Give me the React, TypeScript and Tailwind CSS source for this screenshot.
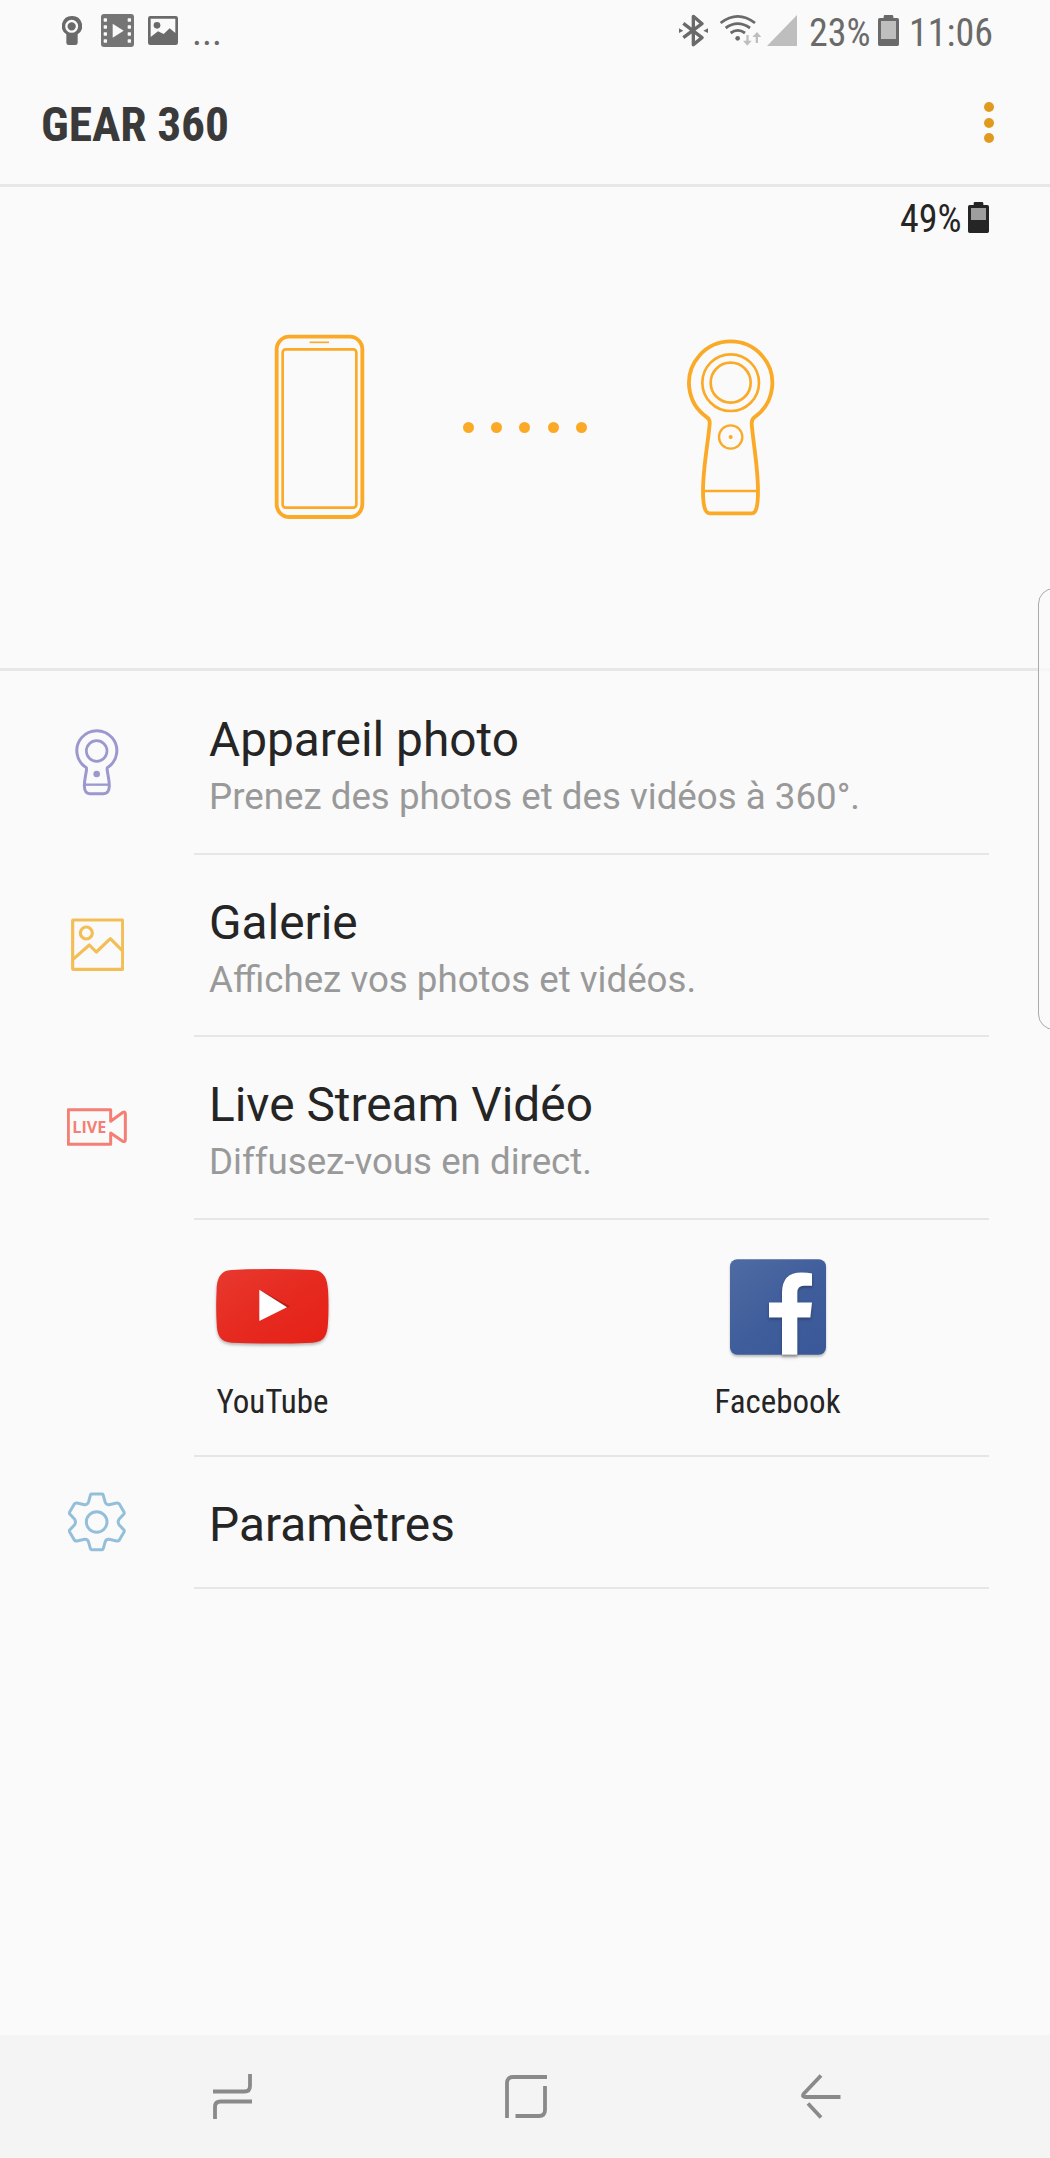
import type { ReactNode } from "react";

const ORANGE = "#fbaa27";

function Battery({ color, empty, level }: { color: string; empty: string; level: number }) {
  return (
    <svg width="21" height="31" viewBox="0 0 63 93" className="shrink-0">
      <path d="M17 9V4q0-4 4-4h21q4 0 4 4v5h12q5 0 5 5v74q0 5-5 5H5q-5 0-5-5V14q0-5 5-5z" fill={color} />
      <rect x="9" y="18" width="45" height={level} fill={empty} />
    </svg>
  );
}

function StatusBar() {
  return (
    <div className="flex h-[62px] items-start justify-between pl-[62px] pr-[58px] text-[38px] leading-[44px] text-[#6a6a6a]">
      <div className="flex items-start">
        <svg width="20" height="29" viewBox="186 48 60 87" className="mt-4">
          <path d="M216 48a30 30 0 0 1 17 55v25q0 7-7 7h-20q-7 0-7-7v-25a30 30 0 0 1 17-55z" fill="#6a6a6a" />
          <circle cx="215" cy="79" r="16" fill="none" stroke="#fafafa" strokeWidth="7" />
        </svg>
        <svg width="33" height="33" viewBox="303 42 99 99" className="ml-[19px] mt-3.5">
          <rect x="303" y="42" width="99" height="99" rx="9" fill="#757575" />
          <g fill="#fafafa">
            <path d="M338 71l33 21-33 21z" />
            {[55, 76, 97, 118].map((y) => (
              <g key={y}>
                <rect x="311" y={y} width="10" height="10" rx="2" />
                <rect x="383" y={y} width="10" height="10" rx="2" />
              </g>
            ))}
          </g>
        </svg>
        <svg width="30" height="29" viewBox="444 48 90 87" className="ml-3.5 mt-4">
          <rect x="444" y="48" width="90" height="87" rx="7" fill="#6a6a6a" />
          <path d="M452 56h74v43l-17-14-18 17-17-8-22 17z" fill="#fafafa" />
          <circle cx="471" cy="76" r="10" fill="#6a6a6a" />
        </svg>
        <span className="ml-[14px] mt-[10px]">...</span>
      </div>
      <div className="flex items-start">
        <svg width="29" height="33" viewBox="87 42 87 99" className="mt-3.5">
          <path d="M100 70l56 43-26 21V49l26 22-56 42" fill="none" stroke="#6a6a6a" strokeWidth="10" strokeLinejoin="round" />
          <path d="M87 85l13 7-13 7zM174 85l-14 7 14 7z" fill="#6a6a6a" />
        </svg>
        <svg width="42" height="32" viewBox="210 42 126 96" className="ml-3 mt-3.5">
          <g fill="none" stroke="#6a6a6a" strokeWidth="8.5">
            <path d="M212 69Q263 29 315 69" />
            <path d="M227 84Q263 58 300 84" />
            <path d="M242 99Q263 83 285 99" />
          </g>
          <circle cx="263" cy="115" r="7" fill="#6a6a6a" />
          <path d="M289 105h7v17h9l-13 15-13-15h10zM317 129h7v-18h10l-13-15-14 15h10z" fill="#bebebe" />
        </svg>
        <svg width="30" height="31" viewBox="0 0 90 93" className="ml-[5px] mt-[15px]">
          <path d="M90 0v93H0z" fill="#bebebe" />
        </svg>
        <Condensed className="ml-3 mt-[11px] w-[60px]">23%</Condensed>
        <div className="ml-[9px] mt-[15px]">
          <Battery color="#6a6a6a" empty="#bebebe" level={54} />
        </div>
        <Condensed className="ml-[10px] mt-[11px] w-[83px]">11:06</Condensed>
      </div>
    </div>
  );
}

function Condensed({ className, children }: { className: string; children: ReactNode }) {
  return (
    <span className={`block whitespace-nowrap font-['Roboto_Condensed',Roboto,sans-serif] [font-stretch:75%] ${className}`}>
      {children}
    </span>
  );
}

function PhoneDrawing() {
  return (
    <svg width="91" height="186" viewBox="102 72 273 558" fill="none" stroke={ORANGE}>
      <rect x="110" y="80" width="257" height="541" rx="38" strokeWidth="11.5" />
      <rect x="128" y="118" width="221" height="475" rx="9" strokeWidth="8" />
      <path d="M209 97h58" strokeWidth="5" />
    </svg>
  );
}

function GearDrawing() {
  return (
    <svg width="89" height="177" viewBox="138 87 267 531" fill="none" stroke={ORANGE}>
      <path
        d="M201 322A125 125 0 1 1 343 322Q335 328 335 341C339 395 354 470 354 543Q354 595 344 606Q341 610 335 610H210Q204 610 200 606Q189 595 189 543C189 470 205 395 209 341Q210 328 201 322z"
        strokeWidth="11.5"
      />
      <circle cx="272" cy="218" r="85" strokeWidth="8" />
      <circle cx="272" cy="218" r="60" strokeWidth="8" />
      <circle cx="272" cy="381" r="35" strokeWidth="7" />
      <circle cx="272" cy="381" r="6" fill={ORANGE} stroke="none" />
      <path d="M190 543h164" strokeWidth="7" />
    </svg>
  );
}

function CameraIcon() {
  return (
    <svg width="44" height="67" viewBox="105 87 132 201" className="mt-0.5" fill="none" stroke="#9a98cf" strokeWidth="9">
      <path d="M139 203A60 60 0 1 1 202 203Q201 206 202 213C204 227 208 240 208 258Q207 281 191 281H149Q134 281 133 258C133 240 137 227 139 213Q140 206 139 203z" />
      <circle cx="170" cy="153" r="31" strokeWidth="8" />
      <path d="M133 254h75" strokeWidth="7" />
      <circle cx="170" cy="222" r="10" fill="#9a98cf" stroke="none" />
    </svg>
  );
}

function GalleryIcon() {
  return (
    <svg width="53" height="53" viewBox="93 654 159 159" fill="none" stroke="#f2be55" strokeWidth="9.5" strokeLinejoin="round">
      <rect x="98" y="660" width="150" height="148" rx="2" />
      <circle cx="139" cy="699" r="18" />
      <path d="M99 778l49-43 21 21 42-40 36 36" />
    </svg>
  );
}

function LiveIcon() {
  return (
    <svg width="60" height="38" viewBox="84 144 180 114" fill="none" stroke="#f47f74" strokeWidth="9" strokeLinejoin="round">
      <path d="M88 149h127v35l37-27q7-3 7 5v77q0 8-8 5l-36-25v34H88z" />
      <text
        x="100"
        y="218"
        textLength="102"
        lengthAdjust="spacingAndGlyphs"
        fill="#f47f74"
        stroke="none"
        className="font-['Open_Sans',sans-serif] text-[47px] font-bold"
      >
        LIVE
      </text>
    </svg>
  );
}

function SettingsIcon() {
  return (
    <svg width="60" height="60" viewBox="81 126 180 180" fill="none" stroke="#94bfda" strokeWidth="9" strokeLinejoin="round">
      <path d="M154 132h33q2 0 3 4l5 19q3 10 12 9l23-5q5-1 8 3l14 24q2 4-1 7l-14 15q-5 8 0 16l14 15q3 3 1 7l-14 24q-3 4-8 3l-23-5q-9-1-12 9l-5 18q-1 4-3 4h-33q-2 0-3-4l-5-18q-3-10-12-9l-23 5q-5 1-8-3l-14-24q-2-4 1-7l14-15q5-8 0-16l-14-15q-3-3-1-7l14-24q3-4 8-3l23 5q9 1 12-9l5-19q1-4 3-4z" />
      <circle cx="170" cy="216" r="31" />
    </svg>
  );
}

function YouTubeLogo() {
  return (
    <svg width="113" height="75" viewBox="108 118 339 225" className="overflow-visible drop-shadow-[0_2px_1.5px_rgba(0,0,0,0.28)]">
      <defs>
        <linearGradient id="yt" x1="0" y1="0" x2="1" y2="1">
          <stop offset="0" stopColor="#e8392f" />
          <stop offset="0.5" stopColor="#e62a20" />
          <stop offset="1" stopColor="#e62117" />
        </linearGradient>
      </defs>
      <path d="M155 121Q277 115 398 121C434 122 442 150 444 180Q447 230 444 280C442 315 434 337 398 339Q277 344 155 339C119 337 111 315 110 280Q107 230 110 180C111 150 119 122 155 121z" fill="url(#yt)" />
      <path d="M238 180l92 50-10 5z" fill="#b5211a" />
      <path d="M238 180l83 53-83 41z" fill="#fff" />
    </svg>
  );
}

function FacebookLogo() {
  return (
    <svg width="96" height="96" viewBox="147 86 288 287" className="overflow-visible drop-shadow-[0_2px_1px_rgba(0,0,0,0.25)]">
      <defs>
        <linearGradient id="fb" x1="0" y1="0" x2="0.8" y2="1">
          <stop offset="0" stopColor="#4f6ba3" />
          <stop offset="0.6" stopColor="#3f5d9b" />
          <stop offset="1" stopColor="#3b5998" />
        </linearGradient>
      </defs>
      <rect x="147" y="86" width="288" height="287" rx="22" fill="url(#fb)" />
      <path
        d="M303 373V261h-39v-45h39v-29q0-61 58-61 20 0 32 3v37h-24q-20 0-20 21v29h44l-5 45h-39v112z"
        fill="#fff"
        className="drop-shadow-[0_5px_4px_rgba(0,0,0,0.3)]"
      />
    </svg>
  );
}

const items = [
  { title: "Appareil photo", text: "Prenez des photos et des vidéos à 360°.", icon: <CameraIcon />, height: "h-[184px]" },
  { title: "Galerie", text: "Affichez vos photos et vidéos.", icon: <GalleryIcon />, height: "h-[182px]" },
  { title: "Live Stream Vidéo", text: "Diffusez-vous en direct.", icon: <LiveIcon />, height: "h-[183px]" },
];

function MenuRow({ title, text, icon, height }: { title: string; text?: string; icon: ReactNode; height: string }) {
  return (
    <div className={`flex pr-[61px] ${height}`}>
      <div className="flex w-[194px] shrink-0 items-center justify-center pb-[3px]">{icon}</div>
      <div className="flex flex-1 flex-col justify-center border-b-2 border-[#e6e6e6] pl-[15px] pt-1">
        <h2 className="pt-0.5 text-[47.8px] leading-[55px] text-[#252525]">{title}</h2>
        {text && <p className="mt-[8px] text-[36.7px] leading-[42px] text-[#999]">{text}</p>}
      </div>
    </div>
  );
}

export default function App() {
  return (
    <div className="relative flex h-[2158px] w-[1050px] flex-col overflow-hidden bg-[#fafafa] font-[Roboto,sans-serif]">
      <StatusBar />

      <header className="flex h-[125px] items-start justify-between border-b-[3px] border-[#e7e7e7] pl-[41px] pr-14">
        <h1 className="mt-[35px] text-[47.5px] font-bold leading-[56px] text-[#3a3a3a]">
          <Condensed className="w-[188px] tracking-[-0.1px]">GEAR 360</Condensed>
        </h1>
        <div className="mt-10 flex flex-col gap-[5.5px]">
          <span className="size-[10px] rounded-full bg-[#e09a20]" />
          <span className="size-[10px] rounded-full bg-[#e09a20]" />
          <span className="size-[10px] rounded-full bg-[#e09a20]" />
        </div>
      </header>

      {/* Connection state */}
      <section className="h-[484px] shrink-0 border-b-[3px] border-[#e7e7e7]">
        <div className="flex h-[63px] items-start justify-end pr-[61px] pt-[9px] text-[38px] leading-[44px] text-[#252525]">
          <Condensed className="mt-px w-[60px]">49%</Condensed>
          <div className="ml-2 mt-[6px]">
            <Battery color="#252525" empty="#9e9e9e" level={36} />
          </div>
        </div>
        <div className="flex items-start pl-[274px] pt-[84px]">
          <PhoneDrawing />
          <div className="ml-[98px] mt-[88px] flex gap-[17.2px]">
            {[0, 1, 2, 3, 4].map((i) => (
              <span key={i} className="size-[11px] rounded-full bg-[#fbaa27]" />
            ))}
          </div>
          <div className="ml-[99px] mt-[5px]">
            <GearDrawing />
          </div>
        </div>
      </section>

      <main className="flex-1">
        {items.map((item) => (
          <MenuRow key={item.title} {...item} />
        ))}

        <div className="ml-[194px] mr-[61px] flex h-[237px] border-b-2 border-[#e6e6e6] pt-[38px] text-[33px] leading-[39px] text-[#252525]">
          <div className="flex w-[157px] flex-col items-center">
            <div className="flex h-[97px] items-center">
              <YouTubeLogo />
            </div>
            <Condensed className="mt-[27px]">YouTube</Condensed>
          </div>
          <div className="ml-[348px] flex w-[157px] flex-col items-center">
            <div className="flex h-[97px] items-center">
              <FacebookLogo />
            </div>
            <Condensed className="mt-[27px]">Facebook</Condensed>
          </div>
        </div>

        <MenuRow title="Paramètres" icon={<SettingsIcon />} height="h-[132px]" />
      </main>

      {/* Edge panel handle */}
      <div className="absolute -right-5 top-[588px] h-[442px] w-8 rounded-[18px] border border-[#aaa] bg-[#fafafa]/80" />

      <nav className="flex h-[123px] shrink-0 items-start bg-[#f4f4f4] pl-[213px] pt-[39px]">
        <svg width="39" height="45" viewBox="0 0 39 45" fill="none" stroke="#8a8a8a" strokeWidth="3.8">
          <path d="M37 0v12q0 5.500-5.500 5.500H0M2 45V33q0-5.500 5.500-5.500H39" />
        </svg>
        <svg width="42" height="44" viewBox="0 0 42 44" className="ml-[253px] mt-px" fill="none" stroke="#8a8a8a" strokeWidth="3.8">
          <path d="M2 43V8q0-6 6-6h34M40 11v24q0 6-6 6H10.500" />
        </svg>
        <svg width="40" height="45" viewBox="0 0 40 45" className="ml-[254px]" fill="none" stroke="#8a8a8a" strokeWidth="3.8">
          <path d="M20 1.500L2.500 20Q1 23 4 23H39.500M7 29.500L20 43.500" />
        </svg>
      </nav>
    </div>
  );
}
